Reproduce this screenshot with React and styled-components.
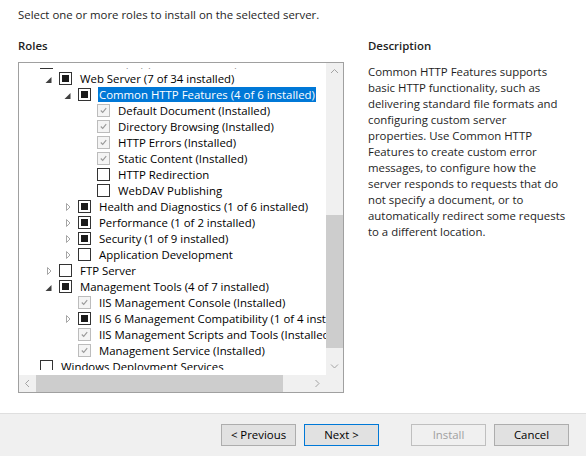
import React from "react";
import styled, { createGlobalStyle } from "styled-components";

const GlobalStyle = createGlobalStyle`
  html, body {
    margin: 0;
    padding: 0;
  }
  body {
    font-family: "Open Sans", "Noto Sans", sans-serif;
    font-size: 11.4px;
    color: #000;
    background: #fff;
  }
`;

const Window = styled.div`
  width: 586px;
  height: 456px;
  display: flex;
  flex-direction: column;
  overflow: hidden;
`;

const Content = styled.div`
  flex: 1;
  background: #fff;
  padding: 7px 18px 0;
`;

const Intro = styled.div`
  line-height: 16px;
  color: #1e1e1e;
  margin-bottom: 15px;
`;

const Columns = styled.div`
  display: grid;
  grid-template-columns: 326px 1fr;
  column-gap: 24px;
`;

const Heading = styled.div`
  line-height: 16px;
  font-weight: 600;
  color: #1e1e1e;
  margin-bottom: ${(p) => p.$gap || 8}px;
`;

const Description = styled.div`
  line-height: 16px;
  color: #1e1e1e;
`;

const TreeBox = styled.div`
  width: 326px;
  height: 331px;
  box-sizing: border-box;
  border: 1px solid #a0a0a0;
  display: grid;
  grid-template-columns: minmax(0, 1fr) 17px;
  grid-template-rows: minmax(0, 1fr) 17px;
  background: #fff;
`;

const Viewport = styled.div`
  padding: 5px 0;
  display: flex;
  min-height: 0;
  min-width: 0;
`;

const Clip = styled.div`
  flex: 1;
  min-width: 0;
  overflow: hidden;
`;

const RowList = styled.div`
  margin-top: -14px;
`;

const Row = styled.div`
  display: flex;
  align-items: center;
  height: 16px;
  padding-left: ${(p) => 2 + p.$level * 19}px;
  white-space: nowrap;
`;

const ExpanderBox = styled.span`
  flex: none;
  width: 19px;
  height: 16px;
  display: block;
`;

const Box = styled.span`
  flex: none;
  box-sizing: border-box;
  width: 13px;
  height: 13px;
  border: 1px solid ${(p) => (p.$state === "checked" ? "#bcbcbc" : "#333")};
  background: ${(p) => (p.$state === "checked" ? "#f4f4f4" : "#fff")};
  padding: 2px;
  display: flex;
  align-items: center;
  justify-content: center;
`;

const Fill = styled.span`
  width: 7px;
  height: 7px;
  background: #1a1a1a;
`;

const Label = styled.span`
  flex: none;
  margin-left: 7px;
  padding: 0 1px;
  line-height: 15px;
  height: 15px;
  color: ${(p) => (p.$selected ? "#fff" : "#000")};
  background: ${(p) => (p.$selected ? "#0078d7" : "transparent")};
`;

const VScroll = styled.div`
  background: #f0f0f0;
  display: flex;
  flex-direction: column;
`;

const HScroll = styled.div`
  background: #f0f0f0;
  display: flex;
`;

const Corner = styled.div`
  background: #f0f0f0;
`;

const ArrowBtn = styled.div`
  flex: none;
  width: 17px;
  height: 17px;
  display: flex;
  align-items: center;
  justify-content: center;
`;

const Track = styled.div`
  flex: 1;
  display: flex;
  flex-direction: ${(p) => (p.$vertical ? "column" : "row")};
`;

const Thumb = styled.div`
  flex: none;
  background: #cdcdcd;
  ${(p) =>
    p.$vertical
      ? `margin-top: ${p.$offset}px; height: ${p.$size}px;`
      : `margin-left: ${p.$offset}px; width: ${p.$size}px;`}
`;

const Footer = styled.div`
  flex: none;
  box-sizing: border-box;
  height: 43px;
  border-top: 1px solid #dfdfdf;
  background: #f0f0f0;
  display: flex;
  justify-content: flex-end;
  align-items: flex-start;
  padding: 10px 17px 0 0;
  gap: 8px;
`;

const Button = styled.button`
  width: 75px;
  height: 22px;
  box-sizing: border-box;
  margin: 0;
  padding: 0;
  font-family: inherit;
  font-size: 11.4px;
  line-height: 20px;
  border: 1px solid ${(p) => (p.$default ? "#0078d7" : p.disabled ? "#bfbfbf" : "#adadad")};
  background: ${(p) => (p.disabled ? "#f0f0f0" : "#e1e1e1")};
  color: ${(p) => (p.disabled ? "#a0a0a0" : "#000")};
  margin-left: ${(p) => (p.$spaced ? 24 : 0)}px;
`;

const Expander = ({ state }) => (
  <ExpanderBox>
    {state === "open" && (
      <svg width="19" height="16">
        <polygon points="11.5,7 11.5,13 5.5,13" fill="#404040" />
      </svg>
    )}
    {state === "closed" && (
      <svg width="19" height="16">
        <polygon points="7.5,5.5 11,9 7.5,12.5" fill="none" stroke="#a6a6a6" strokeWidth="1" />
      </svg>
    )}
  </ExpanderBox>
);

const Check = ({ state }) => (
  <Box $state={state}>
    {state === "mixed" && <Fill />}
    {state === "checked" && (
      <svg width="9" height="9" viewBox="0 0 9 9">
        <polyline points="1,4.5 3.5,7 8,1.5" fill="none" stroke="#9a9a9a" strokeWidth="1.4" />
      </svg>
    )}
  </Box>
);

const Chevron = ({ dir }) => {
  const pts = {
    up: "1,5 4.5,1.5 8,5",
    down: "1,1.5 4.5,5 8,1.5",
    left: "5,1 1.5,4.5 5,8",
    right: "1.5,1 5,4.5 1.5,8",
  }[dir];
  const vertical = dir === "up" || dir === "down";
  return (
    <svg width={vertical ? 9 : 7} height={vertical ? 7 : 9}>
      <polyline points={pts} fill="none" stroke="#a3a3a3" strokeWidth="1" />
    </svg>
  );
};

const roles = [
  { level: 0, box: "mixed", text: "Web Server (IIS) (9 of 43 installed)" },
  { level: 1, exp: "open", box: "mixed", text: "Web Server (7 of 34 installed)" },
  { level: 2, exp: "open", box: "mixed", text: "Common HTTP Features (4 of 6 installed)", selected: true },
  { level: 3, box: "checked", text: "Default Document (Installed)" },
  { level: 3, box: "checked", text: "Directory Browsing (Installed)" },
  { level: 3, box: "checked", text: "HTTP Errors (Installed)" },
  { level: 3, box: "checked", text: "Static Content (Installed)" },
  { level: 3, box: "empty", text: "HTTP Redirection" },
  { level: 3, box: "empty", text: "WebDAV Publishing" },
  { level: 2, exp: "closed", box: "mixed", text: "Health and Diagnostics (1 of 6 installed)" },
  { level: 2, exp: "closed", box: "mixed", text: "Performance (1 of 2 installed)" },
  { level: 2, exp: "closed", box: "mixed", text: "Security (1 of 9 installed)" },
  { level: 2, exp: "closed", box: "empty", text: "Application Development" },
  { level: 1, exp: "closed", box: "empty", text: "FTP Server" },
  { level: 1, exp: "open", box: "mixed", text: "Management Tools (4 of 7 installed)" },
  { level: 2, box: "checked", text: "IIS Management Console (Installed)" },
  { level: 2, exp: "closed", box: "mixed", text: "IIS 6 Management Compatibility (1 of 4 installed)" },
  { level: 2, box: "checked", text: "IIS Management Scripts and Tools (Installed)" },
  { level: 2, box: "checked", text: "Management Service (Installed)" },
  { level: 0, box: "empty", text: "Windows Deployment Services" },
];

const descriptionLines = [
  "Common HTTP Features supports",
  "basic HTTP functionality, such as",
  "delivering standard file formats and",
  "configuring custom server",
  "properties. Use Common HTTP",
  "Features to create custom error",
  "messages, to configure how the",
  "server responds to requests that do",
  "not specify a document, or to",
  "automatically redirect some requests",
  "to a different location.",
];

const App = () => {
  return (
    <>
      <GlobalStyle />
      <Window>
        <Content>
          <Intro>Select one or more roles to install on the selected server.</Intro>
          <Columns>
            <div>
              <Heading>Roles</Heading>
              <TreeBox>
                <Viewport>
                  <Clip>
                    <RowList>
                      {roles.map((r, i) => (
                        <Row key={i} $level={r.level}>
                          <Expander state={r.exp} />
                          <Check state={r.box} />
                          <Label $selected={r.selected}>{r.text}</Label>
                        </Row>
                      ))}
                    </RowList>
                  </Clip>
                </Viewport>
                <VScroll>
                  <ArrowBtn>
                    <Chevron dir="up" />
                  </ArrowBtn>
                  <Track $vertical>
                    <Thumb $vertical $offset={135} $size={133} />
                  </Track>
                  <ArrowBtn>
                    <Chevron dir="down" />
                  </ArrowBtn>
                </VScroll>
                <HScroll>
                  <ArrowBtn>
                    <Chevron dir="left" />
                  </ArrowBtn>
                  <Track>
                    <Thumb $offset={0} $size={247} />
                  </Track>
                  <ArrowBtn>
                    <Chevron dir="right" />
                  </ArrowBtn>
                </HScroll>
                <Corner />
              </TreeBox>
            </div>
            <div>
              <Heading $gap={10}>Description</Heading>
              <Description>
                {descriptionLines.map((line, i) => (
                  <div key={i}>{line}</div>
                ))}
              </Description>
            </div>
          </Columns>
        </Content>
        <Footer>
          <Button>&lt; Previous</Button>
          <Button $default>Next &gt;</Button>
          <Button disabled $spaced>Install</Button>
          <Button>Cancel</Button>
        </Footer>
      </Window>
    </>
  );
};

export default App;
